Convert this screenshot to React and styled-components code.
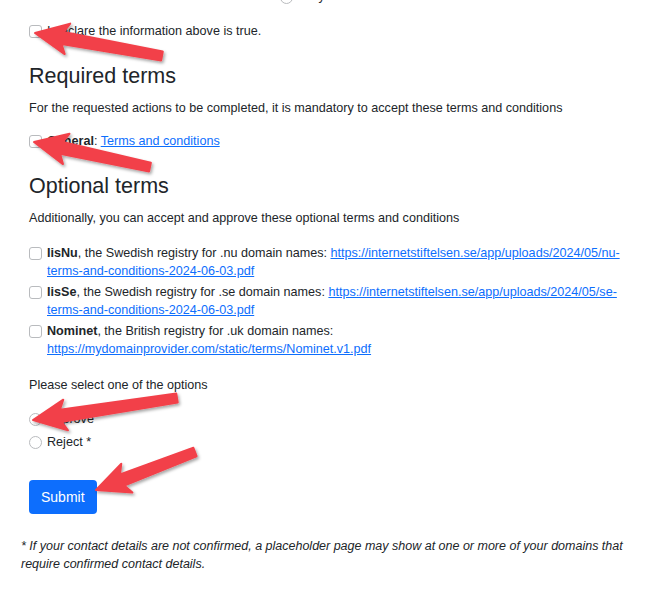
import React from "react";
import styled, { createGlobalStyle } from "styled-components";

const GlobalStyle = createGlobalStyle`
  body {
    margin: 0;
    background: #fff;
    font-family: "Liberation Sans", Arial, sans-serif;
    color: #212529;
  }
`;

const Page = styled.div`
  position: relative;
  width: 651px;
  height: 598px;
  overflow: hidden;
  box-sizing: border-box;
  padding-left: 29px;
  font-size: 12.6px;
  line-height: 18px;
`;

const TopCut = styled.div`
  height: 4px;
  overflow: hidden;
  display: flex;
  align-items: flex-end;
  padding-left: 251px;
`;

const CutInner = styled.div`
  display: flex;
  align-items: center;
  gap: 6px;
  margin-bottom: -1px;
`;

const Row = styled.div`
  display: flex;
  align-items: flex-start;
  gap: 5px;
  margin-top: ${(p) => p.$mt || 0}px;
`;

const Check = styled.input.attrs({ type: "checkbox" })`
  appearance: none;
  margin: 3px 0 0;
  width: 13px;
  height: 13px;
  flex: none;
  border: 1px solid #b9bbbe;
  border-radius: 3px;
  background: #fff;
  box-sizing: border-box;
`;

const Radio = styled.input.attrs({ type: "radio" })`
  appearance: none;
  margin: 3px 0 0;
  width: 13px;
  height: 13px;
  flex: none;
  border: 1px solid #b9bbbe;
  border-radius: 50%;
  background: #fff;
  box-sizing: border-box;
`;

const Label = styled.label`
  display: block;
  max-width: 580px;
`;

const Heading = styled.h3`
  margin: ${(p) => p.$mt}px 0 0;
  font-size: 21.5px;
  font-weight: 400;
  line-height: 26px;
`;

const Text = styled.p`
  margin: ${(p) => p.$mt}px 0 0;
`;

const Link = styled.a`
  color: #0d6efd;
  text-decoration: underline;
`;

const Button = styled.button`
  margin-top: ${(p) => p.$mt}px;
  display: block;
  height: 34px;
  padding: 0 12px;
  border: none;
  border-radius: 4px;
  background: #0d6efd;
  color: #fff;
  font-family: "Liberation Sans", Arial, sans-serif;
  font-size: 14px;
`;

const Footnote = styled.p`
  margin: 23px 0 0 -8px;
  font-style: italic;
  font-size: 12.5px;
  color: #212529;
  max-width: 612px;
`;

const Overlay = styled.svg`
  position: absolute;
  top: 0;
  left: 0;
  pointer-events: none;
`;

const arrows = [
  { tail: [162, 56], tip: [35, 33] },
  { tail: [150, 167], tip: [34, 142] },
  { tail: [177, 398], tip: [33, 420] },
  { tail: [195, 452], tip: [96, 490] },
];

const arrowPath = ({ tail, tip }) => {
  const dx = tip[0] - tail[0];
  const dy = tip[1] - tail[1];
  const len = Math.hypot(dx, dy);
  const ux = dx / len;
  const uy = dy / len;
  const nx = -uy;
  const ny = ux;
  const headLen = 28;
  const half = 15.5;
  const sweep = 5;
  const bx = tip[0] - ux * headLen;
  const by = tip[1] - uy * headLen;
  const cx = bx - ux * sweep;
  const cy = by - uy * sweep;
  const pts = [
    tip,
    [cx + nx * half, cy + ny * half],
    [bx + nx * 6, by + ny * 6],
    [tail[0] + nx * 4.5, tail[1] + ny * 4.5],
    [tail[0] - nx * 4.5, tail[1] - ny * 4.5],
    [bx - nx * 6, by - ny * 6],
    [cx - nx * half, cy - ny * half],
  ];
  return pts.map((p, i) => `${i ? "L" : "M"}${p[0].toFixed(1)} ${p[1].toFixed(1)}`).join(" ") + " Z";
};

export default function App() {
  return (
    <>
      <GlobalStyle />
      <Page>
        <TopCut>
          <CutInner>
            <Radio />
            <span>Only</span>
          </CutInner>
        </TopCut>

        <Row $mt={18}>
          <Check />
          <Label>I declare the information above is true.</Label>
        </Row>

        <Heading $mt={23}>Required terms</Heading>
        <Text $mt={10}>
          For the requested actions to be completed, it is mandatory to accept these terms and conditions
        </Text>
        <Row $mt={15}>
          <Check />
          <Label>
            <b>General</b>: <Link href="#">Terms and conditions</Link>
          </Label>
        </Row>

        <Heading $mt={23}>Optional terms</Heading>
        <Text $mt={10}>Additionally, you can accept and approve these optional terms and conditions</Text>
        <Row $mt={17}>
          <Check />
          <Label>
            <b>IisNu</b>, the Swedish registry for .nu domain names:{" "}
            <Link href="#">https://internetstiftelsen.se/app/uploads/2024/05/nu-terms-and-conditions-2024-06-03.pdf</Link>
          </Label>
        </Row>
        <Row $mt={3}>
          <Check />
          <Label>
            <b>IisSe</b>, the Swedish registry for .se domain names:{" "}
            <Link href="#">https://internetstiftelsen.se/app/uploads/2024/05/se-terms-and-conditions-2024-06-03.pdf</Link>
          </Label>
        </Row>
        <Row $mt={3}>
          <Check />
          <Label>
            <b>Nominet</b>, the British registry for .uk domain names:{" "}
            <Link href="#">https://mydomainprovider.com/static/terms/Nominet.v1.pdf</Link>
          </Label>
        </Row>

        <Text $mt={18}>Please select one of the options</Text>
        <Row $mt={16}>
          <Radio name="choice" />
          <Label>Approve</Label>
        </Row>
        <Row $mt={5}>
          <Radio name="choice" />
          <Label>Reject *</Label>
        </Row>

        <Button $mt={29}>Submit</Button>

        <Footnote>
          * If your contact details are not confirmed, a placeholder page may show at one or more of your domains
          that require confirmed contact details.
        </Footnote>

        <Overlay width="651" height="598" viewBox="0 0 651 598">
          <defs>
            <filter id="arrowShadow" x="-20%" y="-50%" width="140%" height="200%">
              <feDropShadow dx="1.5" dy="2" stdDeviation="1.8" floodColor="#000" floodOpacity="0.35" />
            </filter>
          </defs>
          {arrows.map((a, i) => (
            <path key={i} d={arrowPath(a)} fill="#f2414a" strokeLinejoin="round" stroke="#f2414a" strokeWidth="2" filter="url(#arrowShadow)" />
          ))}
        </Overlay>
      </Page>
    </>
  );
}
